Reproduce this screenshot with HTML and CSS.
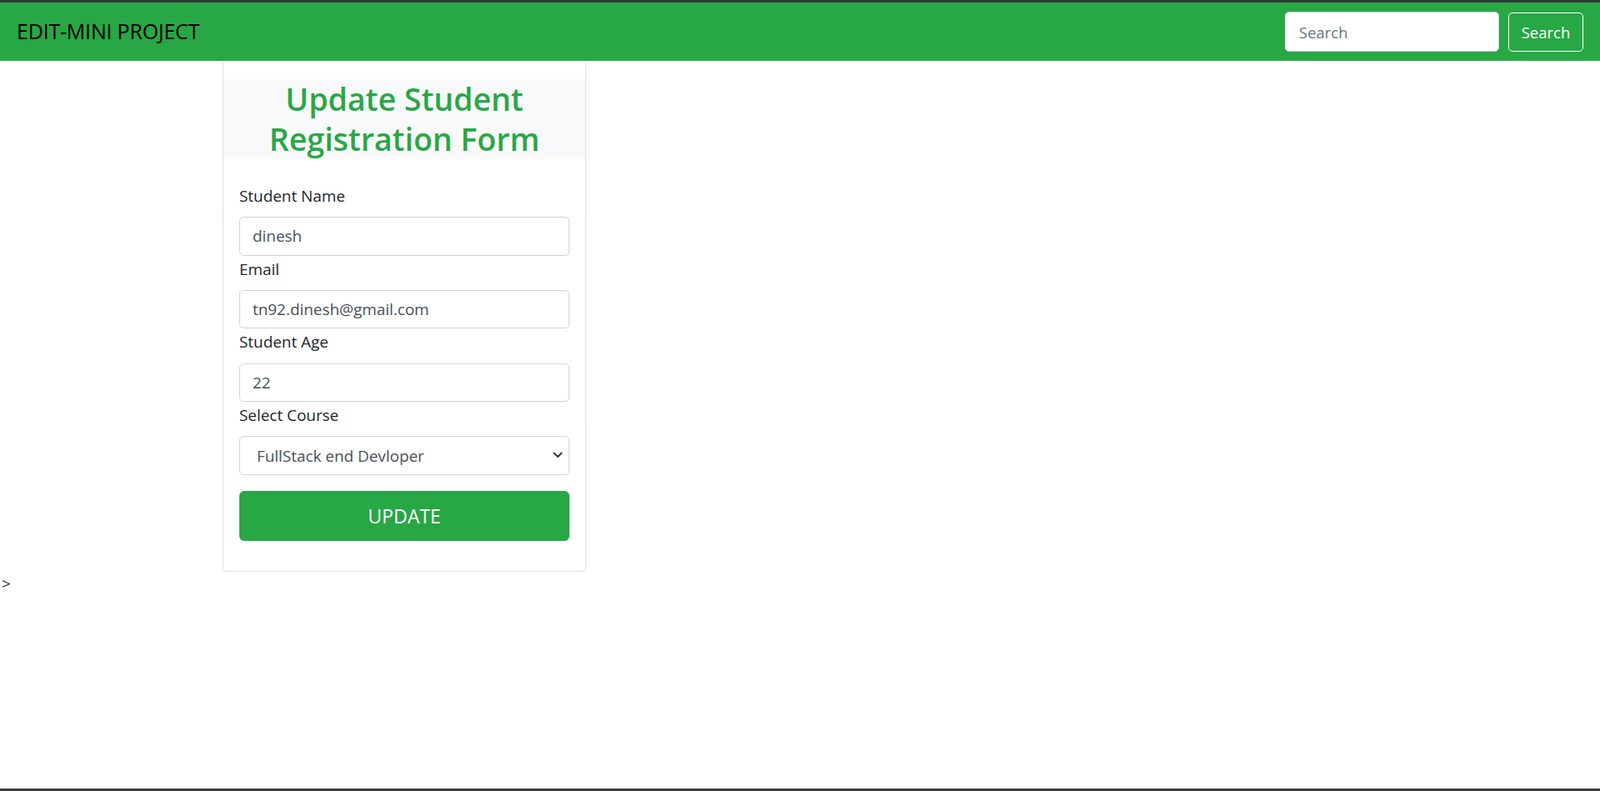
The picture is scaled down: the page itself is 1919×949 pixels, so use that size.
FILE: index.html
```html
<!DOCTYPE html>
<html lang="en">
<head>
<meta charset="utf-8">
<title>Edit Mini Project</title>
<link rel="stylesheet" href="styles.css">
</head>
<body>
<nav class="navbar">
  <span class="brand">EDIT-MINI PROJECT</span>
  <form class="search-form">
    <input class="search-input" type="text" placeholder="Search">
    <button class="search-btn" type="button">Search</button>
  </form>
</nav>
<div class="card">
  <h2 class="card-title">Update Student Registration Form</h2>
  <form class="card-body">
    <div class="field">
      <label class="label">Student Name</label>
      <input class="control" type="text" value="dinesh">
    </div>
    <div class="field">
      <label class="label">Email</label>
      <input class="control" type="text" value="tn92.dinesh@gmail.com">
    </div>
    <div class="field">
      <label class="label">Student Age</label>
      <input class="control" type="text" value="22">
    </div>
    <div class="field">
      <label class="label">Select Course</label>
      <div class="select-wrap">
        <select class="control select">
          <option>FullStack end Devloper</option>
        </select>
        <svg class="chevron" width="12" height="8" viewBox="0 0 12 8"><path d="M1.5 1.5 L6 6 L10.5 1.5" fill="none" stroke="#343a40" stroke-width="2" stroke-linecap="round" stroke-linejoin="round"/></svg>
      </div>
    </div>
    <button class="update-btn" type="button">UPDATE</button>
  </form>
</div>
<div class="trail">&gt;</div>
</body>
</html>
```
FILE: styles.css
```css
html, body {
  margin: 0;
  padding: 0;
}
body {
  font-family: "Open Sans", "Noto Sans", sans-serif;
  font-size: 19.6px;
  line-height: 1.5;
  color: #212529;
  background: #fff;
  min-height: 100vh;
  box-sizing: border-box;
  border-bottom: 3px solid #3b3b3b;
}
.navbar {
  display: flex;
  align-items: center;
  justify-content: space-between;
  height: 70px;
  padding: 0 20px 0 20px;
  background: #28a745;
  border-top: 3px solid #2e3c38;
}
.brand {
  font-size: 25px;
  color: #000;
  letter-spacing: -0.2px;
}
.search-form {
  display: flex;
  align-items: center;
  gap: 11px;
  margin: 0;
}
.search-input {
  box-sizing: border-box;
  width: 257px;
  height: 48px;
  border: 1px solid #ced4da;
  border-radius: 5px;
  padding: 0 16px;
  font-family: inherit;
  font-size: 18.5px;
  color: #495057;
  outline: none;
}
.search-input::placeholder {
  color: #6c757d;
}
.search-btn {
  box-sizing: border-box;
  height: 47px;
  width: 90px;
  border: 1px solid #fff;
  border-radius: 5px;
  background: transparent;
  color: #fff;
  font-family: inherit;
  font-size: 18.5px;
  padding: 0;
}
.card {
  box-sizing: border-box;
  width: 436px;
  margin-left: 267px;
  padding-top: 22px;
  border: 1px solid rgba(0,0,0,.125);
  border-top: none;
  border-radius: 0 0 5px 5px;
}
.card-title {
  margin: 0;
  background: #f8f9fa;
  color: #28a745;
  text-align: center;
  font-size: 37.5px;
  line-height: 48px;
  font-weight: 600;
}
.card-body {
  padding: 30px 19px 36px 19px;
  margin: 0;
}
.field {
  margin-bottom: 2px;
}
.label {
  display: block;
  font-size: 18.9px;
  line-height: 29.4px;
  margin-bottom: 9.8px;
}
.control {
  box-sizing: border-box;
  display: block;
  width: 100%;
  height: 46.5px;
  border: 1px solid #ced4da;
  border-radius: 5px;
  padding: 0 15px;
  font-family: inherit;
  font-size: 18.9px;
  color: #495057;
  background: #fff;
  outline: none;
}
.select-wrap {
  position: relative;
}
.select {
  appearance: none;
  -webkit-appearance: none;
  padding-left: 20px;
}
.chevron {
  position: absolute;
  right: 8px;
  top: 19px;
  pointer-events: none;
}
.update-btn {
  display: block;
  box-sizing: border-box;
  width: 100%;
  height: 59.5px;
  margin-top: 19.5px;
  border: none;
  border-radius: 6px;
  background: #28a745;
  color: #fff;
  font-family: inherit;
  font-size: 23px;
}
.trail {
  padding-left: 2px;
  font-size: 18.9px;
  line-height: 29.4px;
}
```
